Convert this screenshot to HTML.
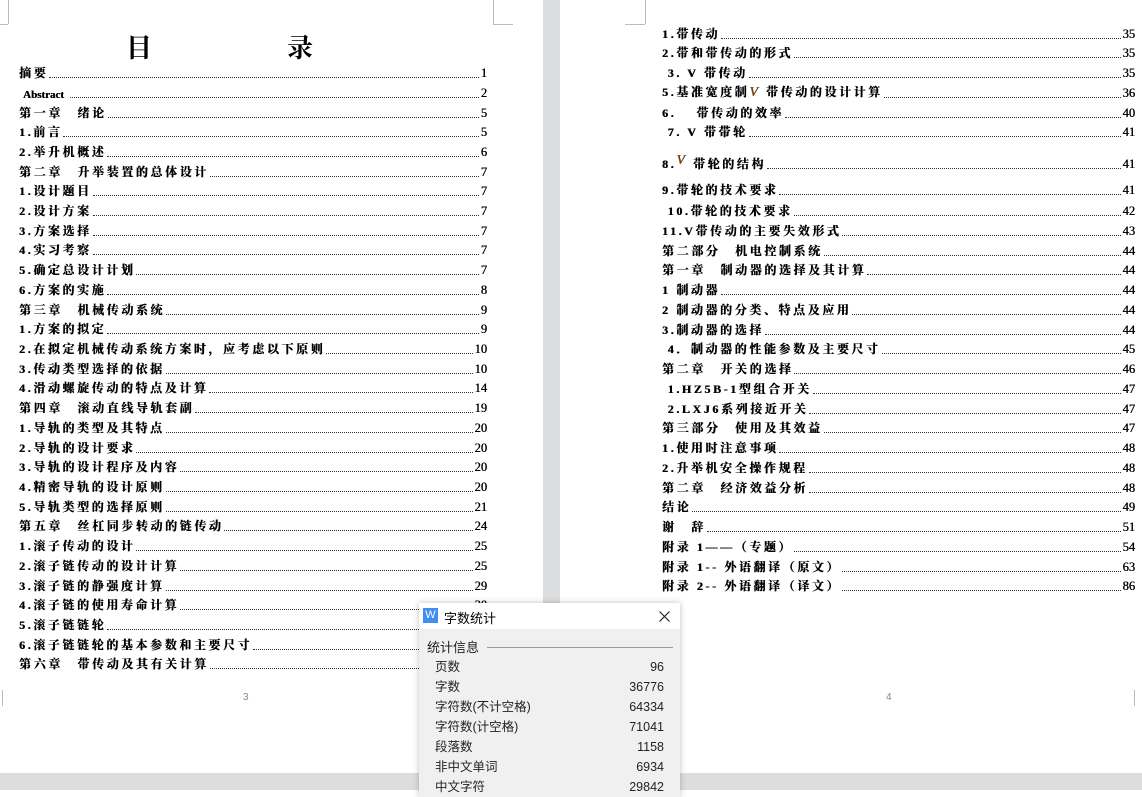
<!DOCTYPE html>
<html><head><meta charset="utf-8"><style>
*{margin:0;padding:0;box-sizing:border-box}
body{width:1142px;height:797px;background:#fff;position:relative;overflow:hidden;font-family:"Liberation Serif","Noto Serif CJK SC",serif}
.gap{position:absolute;left:543px;top:0;width:17px;height:797px;background:#dcdddf}
.band{position:absolute;left:0;top:773px;width:1142px;height:17px;background:#dcdddf}
.bw{position:absolute;left:0;top:790px;width:1142px;height:7px;background:#fff}
.r{position:absolute;display:flex;align-items:flex-end;height:16px;font-size:12px;font-weight:700;color:#000;white-space:nowrap;letter-spacing:2.6px;text-shadow:0.4px 0 0 #000}
.r .l{flex:0 0 auto}
.r .d{flex:1 1 auto;border-bottom:1px dotted #333;margin:0 2px 3px 1px;height:1px}
.r .n{flex:0 0 auto;letter-spacing:0;font-weight:400;font-family:"Liberation Serif",serif;font-size:12.5px}
.L{left:19px;width:468px}
.R{left:662px;width:473px}
.t{position:absolute;top:28px;font-size:26px;font-weight:700;font-family:"Noto Serif CJK SC",serif}
.pn{position:absolute;top:692px;font-size:10px;color:#7a8aa0;font-family:"Liberation Sans",sans-serif}
.m{position:absolute;background:#bbb}
.dlg{position:absolute;left:419px;top:603px;width:261px;height:194px;background:#f0f0f0;box-shadow:0 0 6px rgba(0,0,0,.25);font-family:"Liberation Sans","Noto Sans CJK SC",sans-serif;font-size:12px;color:#000}
.tb{height:26px;background:#fff;position:relative}
.ic{position:absolute;left:4px;top:5px;width:15px;height:15px;background:#3f8ef0;color:#fff;font-size:11px;line-height:15px;text-align:center}
.tt{position:absolute;left:25px;top:5px;font-size:13px}
.sec{position:absolute;left:8px;top:34px;font-size:13px;color:#222}
.hl{position:absolute;left:68px;top:44px;width:186px;height:1px;background:#999}
.row{position:absolute;left:16px;width:229px;display:flex;justify-content:space-between;align-items:baseline;font-size:12.5px;color:#222;line-height:16px}
</style></head><body>
<div class="gap"></div>
<div class="m" style="left:8px;top:0;width:1px;height:24px"></div>
<div class="m" style="left:0;top:24px;width:8px;height:1px"></div>
<div class="m" style="left:493px;top:0;width:1px;height:24px"></div>
<div class="m" style="left:493px;top:24px;width:20px;height:1px"></div>
<div class="m" style="left:2px;top:690px;width:1px;height:16px"></div>
<div class="m" style="left:645px;top:0;width:1px;height:24px"></div>
<div class="m" style="left:625px;top:24px;width:20px;height:1px"></div>
<div class="m" style="left:1134px;top:690px;width:1px;height:16px"></div>
<div class="t" style="left:126px">目</div>
<div class="t" style="left:287px">录</div>

<div class="r L" style="top:65px"><span class="l">摘要</span><span class="d"></span><span class="n">1</span></div>
<div class="r L" style="top:85px"><span class="l" style="font-size:11px;letter-spacing:0;padding-left:4px">Abstract&nbsp;&nbsp;</span><span class="d"></span><span class="n">2</span></div>
<div class="r L" style="top:105px"><span class="l">第一章　绪论</span><span class="d"></span><span class="n">5</span></div>
<div class="r L" style="top:124px"><span class="l">1.前言</span><span class="d"></span><span class="n">5</span></div>
<div class="r L" style="top:144px"><span class="l">2.举升机概述</span><span class="d"></span><span class="n">6</span></div>
<div class="r L" style="top:164px"><span class="l">第二章　升举装置的总体设计</span><span class="d"></span><span class="n">7</span></div>
<div class="r L" style="top:183px"><span class="l">1.设计题目</span><span class="d"></span><span class="n">7</span></div>
<div class="r L" style="top:203px"><span class="l">2.设计方案</span><span class="d"></span><span class="n">7</span></div>
<div class="r L" style="top:223px"><span class="l">3.方案选择</span><span class="d"></span><span class="n">7</span></div>
<div class="r L" style="top:242px"><span class="l">4.实习考察</span><span class="d"></span><span class="n">7</span></div>
<div class="r L" style="top:262px"><span class="l">5.确定总设计计划</span><span class="d"></span><span class="n">7</span></div>
<div class="r L" style="top:282px"><span class="l">6.方案的实施</span><span class="d"></span><span class="n">8</span></div>
<div class="r L" style="top:302px"><span class="l">第三章　机械传动系统</span><span class="d"></span><span class="n">9</span></div>
<div class="r L" style="top:321px"><span class="l">1.方案的拟定</span><span class="d"></span><span class="n">9</span></div>
<div class="r L" style="top:341px"><span class="l">2.在拟定机械传动系统方案时，应考虑以下原则</span><span class="d"></span><span class="n">10</span></div>
<div class="r L" style="top:361px"><span class="l">3.传动类型选择的依据</span><span class="d"></span><span class="n">10</span></div>
<div class="r L" style="top:380px"><span class="l">4.滑动螺旋传动的特点及计算</span><span class="d"></span><span class="n">14</span></div>
<div class="r L" style="top:400px"><span class="l">第四章　滚动直线导轨套副</span><span class="d"></span><span class="n">19</span></div>
<div class="r L" style="top:420px"><span class="l">1.导轨的类型及其特点</span><span class="d"></span><span class="n">20</span></div>
<div class="r L" style="top:440px"><span class="l">2.导轨的设计要求</span><span class="d"></span><span class="n">20</span></div>
<div class="r L" style="top:459px"><span class="l">3.导轨的设计程序及内容</span><span class="d"></span><span class="n">20</span></div>
<div class="r L" style="top:479px"><span class="l">4.精密导轨的设计原则</span><span class="d"></span><span class="n">20</span></div>
<div class="r L" style="top:499px"><span class="l">5.导轨类型的选择原则</span><span class="d"></span><span class="n">21</span></div>
<div class="r L" style="top:518px"><span class="l">第五章　丝杠同步转动的链传动</span><span class="d"></span><span class="n">24</span></div>
<div class="r L" style="top:538px"><span class="l">1.滚子传动的设计</span><span class="d"></span><span class="n">25</span></div>
<div class="r L" style="top:558px"><span class="l">2.滚子链传动的设计计算</span><span class="d"></span><span class="n">25</span></div>
<div class="r L" style="top:578px"><span class="l">3.滚子链的静强度计算</span><span class="d"></span><span class="n">29</span></div>
<div class="r L" style="top:597px"><span class="l">4.滚子链的使用寿命计算</span><span class="d"></span><span class="n">30</span></div>
<div class="r L" style="top:617px"><span class="l">5.滚子链链轮</span><span class="d"></span><span class="n">31</span></div>
<div class="r L" style="top:637px"><span class="l">6.滚子链链轮的基本参数和主要尺寸</span><span class="d"></span><span class="n">32</span></div>
<div class="r L" style="top:656px"><span class="l">第六章　带传动及其有关计算</span><span class="d"></span><span class="n">34</span></div>
<div class="pn" style="left:243px">3</div>

<div class="r R" style="top:26px"><span class="l">1.带传动</span><span class="d"></span><span class="n">35</span></div>
<div class="r R" style="top:45px"><span class="l">2.带和带传动的形式</span><span class="d"></span><span class="n">35</span></div>
<div class="r R" style="top:65px"><span class="l">&nbsp;3.  V 带传动</span><span class="d"></span><span class="n">35</span></div>
<div class="r R" style="top:85px"><span class="l">5.基准宽度制<i style="color:#8a4a00;font-weight:400;font-size:14px">V</i> 带传动的设计计算</span><span class="d"></span><span class="n">36</span></div>
<div class="r R" style="top:105px"><span class="l">6.　 带传动的效率</span><span class="d"></span><span class="n">40</span></div>
<div class="r R" style="top:124px"><span class="l">&nbsp;7.  V 带带轮</span><span class="d"></span><span class="n">41</span></div>
<div class="r R" style="top:156px"><span class="l">8.<i style="color:#8a4a00;font-weight:400;font-size:14px;vertical-align:4px">V</i> 带轮的结构</span><span class="d"></span><span class="n">41</span></div>
<div class="r R" style="top:182px"><span class="l">9.带轮的技术要求</span><span class="d"></span><span class="n">41</span></div>
<div class="r R" style="top:203px"><span class="l">&nbsp;10.带轮的技术要求</span><span class="d"></span><span class="n">42</span></div>
<div class="r R" style="top:223px"><span class="l">11.V带传动的主要失效形式</span><span class="d"></span><span class="n">43</span></div>
<div class="r R" style="top:243px"><span class="l">第二部分　机电控制系统</span><span class="d"></span><span class="n">44</span></div>
<div class="r R" style="top:262px"><span class="l">第一章　制动器的选择及其计算</span><span class="d"></span><span class="n">44</span></div>
<div class="r R" style="top:282px"><span class="l">1 制动器</span><span class="d"></span><span class="n">44</span></div>
<div class="r R" style="top:302px"><span class="l">2 制动器的分类、特点及应用</span><span class="d"></span><span class="n">44</span></div>
<div class="r R" style="top:322px"><span class="l">3.制动器的选择</span><span class="d"></span><span class="n">44</span></div>
<div class="r R" style="top:341px"><span class="l">&nbsp;4．制动器的性能参数及主要尺寸</span><span class="d"></span><span class="n">45</span></div>
<div class="r R" style="top:361px"><span class="l">第二章　开关的选择</span><span class="d"></span><span class="n">46</span></div>
<div class="r R" style="top:381px"><span class="l">&nbsp;1.HZ5B-1型组合开关</span><span class="d"></span><span class="n">47</span></div>
<div class="r R" style="top:401px"><span class="l">&nbsp;2.LXJ6系列接近开关</span><span class="d"></span><span class="n">47</span></div>
<div class="r R" style="top:420px"><span class="l">第三部分　使用及其效益</span><span class="d"></span><span class="n">47</span></div>
<div class="r R" style="top:440px"><span class="l">1.使用时注意事项</span><span class="d"></span><span class="n">48</span></div>
<div class="r R" style="top:460px"><span class="l">2.升举机安全操作规程</span><span class="d"></span><span class="n">48</span></div>
<div class="r R" style="top:480px"><span class="l">第二章　经济效益分析</span><span class="d"></span><span class="n">48</span></div>
<div class="r R" style="top:499px"><span class="l">结论</span><span class="d"></span><span class="n">49</span></div>
<div class="r R" style="top:519px"><span class="l">谢　辞</span><span class="d"></span><span class="n">51</span></div>
<div class="r R" style="top:539px"><span class="l">附录 1——（专题）</span><span class="d"></span><span class="n">54</span></div>
<div class="r R" style="top:559px"><span class="l">附录 1-- 外语翻译（原文）</span><span class="d"></span><span class="n">63</span></div>
<div class="r R" style="top:578px"><span class="l">附录 2-- 外语翻译（译文）</span><span class="d"></span><span class="n">86</span></div>
<div class="pn" style="left:886px">4</div>

<div class="band"></div>
<div class="bw"></div>

<div class="dlg">
 <div class="tb"><div class="ic">W</div><div class="tt">字数统计</div>
 <svg style="position:absolute;left:240px;top:8px" width="11" height="11" viewBox="0 0 11 11"><path d="M0.5 0.5L10.5 10.5M10.5 0.5L0.5 10.5" stroke="#222" stroke-width="1.2"/></svg></div>
 <div class="sec">统计信息</div><div class="hl"></div>
 <div class="row" style="top:56px"><span>页数</span><span>96</span></div>
 <div class="row" style="top:76px"><span>字数</span><span>36776</span></div>
 <div class="row" style="top:96px"><span>字符数(不计空格)</span><span>64334</span></div>
 <div class="row" style="top:116px"><span>字符数(计空格)</span><span>71041</span></div>
 <div class="row" style="top:136px"><span>段落数</span><span>1158</span></div>
 <div class="row" style="top:156px"><span>非中文单词</span><span>6934</span></div>
 <div class="row" style="top:176px"><span>中文字符</span><span>29842</span></div>
</div>
</body></html>
